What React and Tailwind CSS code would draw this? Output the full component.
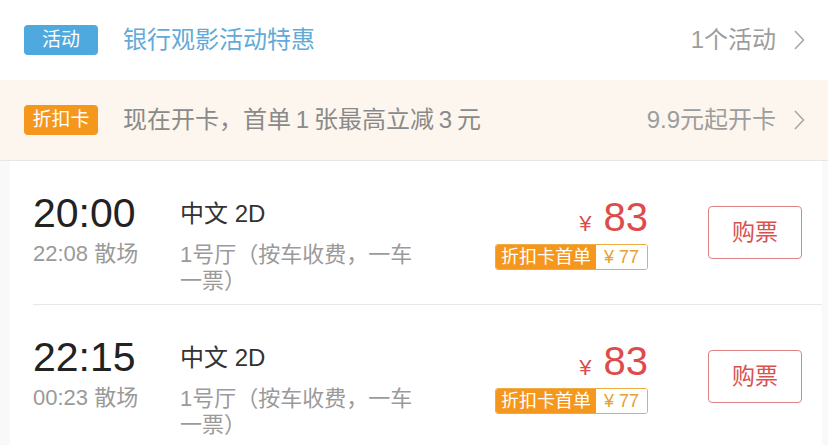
const shows = [
  { start: "20:00", end: "22:08 散场", lang: "中文 2D", hall: "1号厅（按车收费，一车一票）", price: "83", card: "77" },
  { start: "22:15", end: "00:23 散场", lang: "中文 2D", hall: "1号厅（按车收费，一车一票）", price: "83", card: "77" },
];

function Chevron() {
  return (
    <svg width="12" height="22" viewBox="0 0 12 22" className="ml-[17px]">
      <path d="M2 2 L10.5 11 L2 20" fill="none" stroke="#a8a8a8" strokeWidth="1.6" />
    </svg>
  );
}

function PromoRow({ tag, tagBg, text, textColor, right, bg }) {
  return (
    <div className={`flex items-center h-[80px] pl-[24px] pr-[23px] ${bg}`}>
      <div className={`w-[74px] h-[30px] rounded-[4px] flex items-center justify-center text-[19px] text-white ${tagBg}`}>
        {tag}
      </div>
      <div className={`ml-[25px] text-[24px] ${textColor}`}>{text}</div>
      <div className="ml-auto flex items-center text-[24px] text-[#9d9d9d]">
        {right}
        <Chevron />
      </div>
    </div>
  );
}

export default function App() {
  return (
    <div className="w-[828px] h-[445px] overflow-hidden bg-white font-['Liberation_Sans','Noto_Sans_CJK_SC',sans-serif]">
      <PromoRow tag="活动" tagBg="bg-[#4ea9de]" text="银行观影活动特惠" textColor="text-[#62abd6]" right="1个活动" bg="bg-white" />
      <PromoRow tag="折扣卡" tagBg="bg-[#f5961d]" text={"现在开卡，首单\u20091\u2009张最高立减\u20093\u2009元"} textColor="text-[#8a8a8a]" right="9.9元起开卡" bg="bg-[#fdf6ee]" />
      <div className="border-t border-[#e6e6e6] bg-[#f9f9f9] h-[300px]">
        <div className="ml-[10px] w-[812px] h-full bg-white">
          {shows.map((s, i) => (
            <div key={i} className={`ml-[23px] h-[144px] flex items-start pr-[20px] ${i === 0 ? "border-b border-[#e8e8e8]" : ""}`}>
              <div className="w-[147px] pt-[32px]">
                <div className="text-[41px] leading-[40px] text-[#222]">{s.start}</div>
                <div className="mt-[8px] text-[22px] leading-[26px] text-[#9a9a9a]">{s.end}</div>
              </div>
              <div className="w-[240px] pt-[38px]">
                <div className="text-[24px] leading-[30px] text-[#333]">{s.lang}</div>
                <div className="mt-[13px] text-[22px] leading-[26px] text-[#9a9a9a]">{s.hall}</div>
              </div>
              <div className="flex-1 flex flex-col items-end pt-[36px]">
                <div className="flex items-baseline text-[#de4b4b]">
                  <span className="text-[22px] mr-[12px]">¥</span>
                  <span className="text-[40px] leading-[40px]">{s.price}</span>
                </div>
                <div className="mt-[4px] flex h-[26px] rounded-[3px] overflow-hidden border border-[#eeac45]">
                  <span className="bg-[#f5961d] text-white text-[18px] leading-[24px] px-[5px]">折扣卡首单</span>
                  <span className="bg-white text-[#e5a036] text-[18px] leading-[24px] px-[8px]">¥ {s.card}</span>
                </div>
              </div>
              <div className="ml-[60px] mt-[45px] w-[94px] h-[53px] rounded-[4px] border-[1.5px] border-[#dd8585] flex items-center justify-center text-[23px] text-[#d9514f]">
                购票
              </div>
            </div>
          ))}
        </div>
      </div>
    </div>
  );
}
